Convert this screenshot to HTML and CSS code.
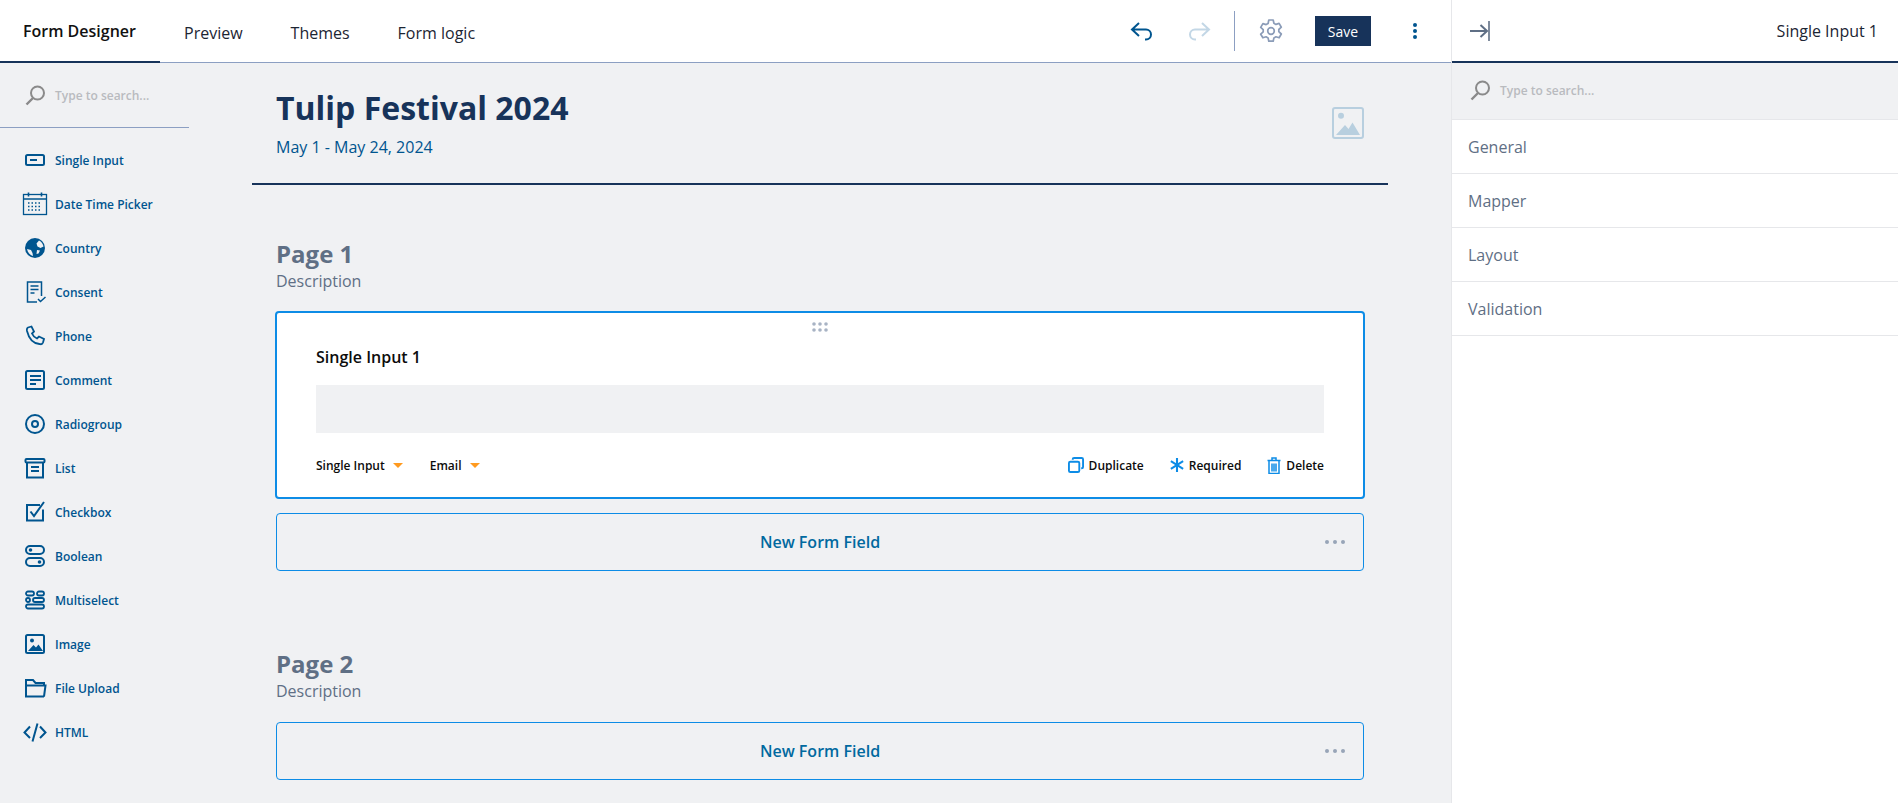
FILE: index.html
```html
<!DOCTYPE html>
<html lang="en">
<head>
<meta charset="utf-8">
<title>Form Designer</title>
<link rel="stylesheet" href="styles.css">
</head>
<body>
<div class="app">
  <div class="main">
    <header class="topbar">
      <nav class="tabs">
        <a class="tab tab-active">Form Designer</a>
        <a class="tab">Preview</a>
        <a class="tab">Themes</a>
        <a class="tab">Form logic</a>
      </nav>
      <div class="tools">
        <svg class="tool-undo" width="26" height="20" viewBox="0 0 26 20" fill="none" stroke="#00558f" stroke-width="2"><path d="M2 8.500h14a5 5 0 0 1 0 10h-1M9 2 2 8.500l7 6.500"/></svg>
        <svg class="tool-redo" width="26" height="20" viewBox="0 0 26 20" fill="none" stroke="#c3d7e6" stroke-width="2"><path d="M24 8.500H10a5 5 0 0 0 0 10h1M17 2l7 6.500-7 6.500"/></svg>
        <span class="tool-sep"></span>
        <svg class="tool-gear" width="26" height="26" viewBox="0 0 26 26" fill="none" stroke="#8b9cb8" stroke-width="1.700"><path d="M10.800 2h4.400l.7 3.300 2 1.100 3.200-1 2.200 3.800-2.500 2.300v2.200l2.500 2.300-2.200 3.800-3.200-1-2 1.100-.7 3.300h-4.400l-.7-3.300-2-1.100-3.200 1L2.700 16.200l2.500-2.300v-2.200L2.700 9.400l2.200-3.800 3.200 1 2-1.100z" stroke-linejoin="round"/><circle cx="13" cy="13" r="3.300"/></svg>
        <button class="save">Save</button>
        <svg class="tool-more" width="6" height="18" viewBox="0 0 6 18" fill="#00558f"><circle cx="3" cy="3" r="2"/><circle cx="3" cy="9" r="2"/><circle cx="3" cy="15" r="2"/></svg>
      </div>
    </header>
    <div class="workspace">
      <aside class="toolbox">
        <div class="search search-left">
          <svg class="search-icon" width="21" height="21" viewBox="0 0 21 21" fill="none" stroke="#8a8a8a" stroke-width="2"><circle cx="12.500" cy="8" r="6.500"/><path d="M8 13 1.500 19.500" stroke-width="2.400"/></svg>
          <span class="search-text">Type to search...</span>
        </div>
        <ul class="items">
          <li class="item"><svg class="ic" width="26" height="24" viewBox="0 0 26 24" fill="none" stroke="#00558f" stroke-width="2"><rect x="4" y="7" width="18" height="10" rx="1.500"/><path d="M8 12h7"/></svg>Single Input</li>
          <li class="item"><svg class="ic" width="26" height="24" viewBox="0 0 26 24" fill="none" stroke="#00558f" stroke-width="1.300"><rect x="1.500" y="2.500" width="23" height="20"/><path d="M1.500 7h23M6.500 .5v4M19.500 .5v4" stroke-width="1.600"/><path d="M6 11h14M6 14.500h14M6 18h14" stroke-width="1.500" stroke-dasharray="1.500 2"/></svg>Date Time Picker</li>
          <li class="item"><svg class="ic" width="26" height="24" viewBox="0 0 26 24"><circle cx="13" cy="12" r="10" fill="#00558f"/><path d="M17 4.500c2.500 1 4 3.500 4.500 6l-3 1.500-3-1.500-1-3zM5 13l4 1 1.500 3 .5 3c-3-1-5.300-3.500-6-7zM15 14l3 .5-1.500 3-2 .5z" fill="#f0f1f3"/></svg>Country</li>
          <li class="item"><svg class="ic" width="26" height="24" viewBox="0 0 26 24" fill="none" stroke="#00558f" stroke-width="1.500"><path d="M19.500 16V2H5.500v20H15"/><path d="M8.500 6h8M8.500 9.500h8M8.500 13h4" stroke-width="1.500"/><path d="m16 19 2.500 2.500L23.500 17" stroke-width="1.500"/></svg>Consent</li>
          <li class="item"><svg class="ic" width="26" height="24" viewBox="0 0 26 24" fill="none" stroke="#00558f" stroke-width="1.800"><path d="M6 3.500 9.500 2.500 12 7.500 10 9.500c1 2.500 2.500 4 5 5l2-2 5 2.500-1 3.500c-.5 1.500-2 2-3.500 1.500C11 19.500 7 15 5 7c-.3-1.500 0-3 1-3.500z"/></svg>Phone</li>
          <li class="item"><svg class="ic" width="26" height="24" viewBox="0 0 26 24" fill="none" stroke="#00558f" stroke-width="2"><rect x="4" y="3" width="18" height="18" rx="1.500"/><path d="M8 8h11M8 12h11M8 16h6"/></svg>Comment</li>
          <li class="item"><svg class="ic" width="26" height="24" viewBox="0 0 26 24" fill="none" stroke="#00558f" stroke-width="2"><circle cx="13" cy="12" r="9"/><circle cx="13" cy="12" r="3"/></svg>Radiogroup</li>
          <li class="item"><svg class="ic" width="26" height="24" viewBox="0 0 26 24" fill="none" stroke="#00558f" stroke-width="2"><rect x="3.500" y="3" width="19" height="3.500" rx="1"/><path d="M5 6v15.500h16V6M9 11h8M9 15h8"/></svg>List</li>
          <li class="item"><svg class="ic" width="26" height="24" viewBox="0 0 26 24" fill="none" stroke="#00558f" stroke-width="2"><path d="M21 9.500v11H5V5h13"/><path d="m8.500 11.500 3.500 4.500 10-14"/></svg>Checkbox</li>
          <li class="item"><svg class="ic" width="26" height="24" viewBox="0 0 26 24" fill="none" stroke="#00558f" stroke-width="2"><rect x="4" y="2" width="18" height="8" rx="4"/><rect x="4" y="14" width="18" height="8" rx="4"/><circle cx="8.500" cy="6" r="1.800" fill="#00558f" stroke="none"/><circle cx="17.500" cy="18" r="1.800" fill="#00558f" stroke="none"/></svg>Boolean</li>
          <li class="item"><svg class="ic" width="26" height="24" viewBox="0 0 26 24" fill="none" stroke="#00558f" stroke-width="1.800"><rect x="4" y="3.500" width="8" height="4" rx="2"/><rect x="15" y="3.500" width="7" height="4" rx="2"/><rect x="4" y="10" width="4" height="4" rx="2"/><rect x="11" y="10" width="11" height="4" rx="2"/><rect x="4" y="16.500" width="18" height="4" rx="2"/></svg>Multiselect</li>
          <li class="item"><svg class="ic" width="26" height="24" viewBox="0 0 26 24"><rect x="4" y="3" width="18" height="18" rx="1.500" fill="none" stroke="#00558f" stroke-width="2"/><circle cx="10" cy="8.500" r="2" fill="#00558f"/><path d="M6 19l5.500-6 2.500 2.500 2.500-3L21 19z" fill="#00558f"/></svg>Image</li>
          <li class="item"><svg class="ic" width="26" height="24" viewBox="0 0 26 24" fill="none" stroke="#00558f" stroke-width="2"><path d="M22 20.500H4V4h7l2.500 3H22v2M4 20.500V9.500h19.500L22 20.500"/></svg>File Upload</li>
          <li class="item"><svg class="ic" width="26" height="24" viewBox="0 0 26 24" fill="none" stroke="#00558f" stroke-width="2"><path d="M8 6.500 2.500 12.500 8 18M18 6.500l5.500 6L18 18M15.500 3.500l-5 18"/></svg>HTML</li>
        </ul>
      </aside>
      <main class="canvas">
        <section class="form-head">
          <div class="form-title">
            <h1>Tulip Festival 2024</h1>
            <p>May 1 - May 24, 2024</p>
          </div>
          <svg class="logo-ph" width="32" height="32" viewBox="0 0 32 32" fill="none"><rect x="1" y="1" width="30" height="30" rx="2" stroke="#b8cfdf" stroke-width="2"/><circle cx="9" cy="8.700" r="3" fill="#b8cfdf"/><path d="M4 28 13 18l3.500 4 4-6.500L28 28z" fill="#b8cfdf"/></svg>
        </section>
        <section class="page page-one">
          <h2>Page 1</h2>
          <p class="page-desc">Description</p>
          <div class="card">
            <svg class="drag" width="16" height="10" viewBox="0 0 16 10" fill="#a8b3c4"><circle cx="2" cy="2" r="1.800"/><circle cx="8" cy="2" r="1.800"/><circle cx="14" cy="2" r="1.800"/><circle cx="2" cy="8" r="1.800"/><circle cx="8" cy="8" r="1.800"/><circle cx="14" cy="8" r="1.800"/></svg>
            <div class="card-title">Single Input 1</div>
            <div class="field"></div>
            <div class="card-foot">
              <div class="selects">
                <span class="sel">Single Input<i class="caret"></i></span>
                <span class="sel">Email<i class="caret"></i></span>
              </div>
              <div class="actions">
                <span class="act"><svg width="16" height="16" viewBox="0 0 17 17" fill="none" stroke="#0d8ce6" stroke-width="2"><rect x="1" y="5" width="11" height="11" rx="1.500"/><path d="M5 3V2.500C5 1.700 5.700 1 6.500 1h8c.8 0 1.500.7 1.500 1.500v8c0 .8-.7 1.500-1.500 1.500H14"/></svg>Duplicate</span>
                <span class="act act-req"><svg width="16" height="16" viewBox="0 0 17 17" fill="none" stroke="#0d8ce6" stroke-width="2.200"><path d="M8.500 1v15M2 4.500l13 8M15 4.500l-13 8"/></svg>Required</span>
                <span class="act act-del"><svg width="14" height="17" viewBox="0 0 14 17" fill="none" stroke="#0d8ce6" stroke-width="1.500"><path d="M.5 3.500h13M5 3.500V1h4v2.500"/><path d="M2 3.500v13h10v-13M5 6.500v8M7 6.500v8M9 6.500v8"/></svg>Delete</span>
              </div>
            </div>
          </div>
          <div class="new-field"><span>New Form Field</span><i class="dots"><b></b><b></b><b></b></i></div>
        </section>
        <section class="page page-two">
          <h2>Page 2</h2>
          <p class="page-desc">Description</p>
          <div class="new-field new-field-two"><span>New Form Field</span><i class="dots"><b></b><b></b><b></b></i></div>
        </section>
      </main>
    </div>
  </div>
  <aside class="panel">
    <header class="panel-top">
      <svg width="20" height="20" viewBox="0 0 20 20" fill="none" stroke="#5f6f85" stroke-width="2"><path d="M0 10h17M10.500 4l6.500 6-6.500 6"/><path d="M19 0v20" stroke-width="1.600"/></svg>
      <span class="panel-name">Single Input 1</span>
    </header>
    <div class="search search-right">
      <svg class="search-icon" width="21" height="21" viewBox="0 0 21 21" fill="none" stroke="#8a8a8a" stroke-width="2"><circle cx="12.500" cy="8" r="6.500"/><path d="M8 13 1.500 19.500" stroke-width="2.400"/></svg>
      <span class="search-text">Type to search...</span>
    </div>
    <div class="panel-row">General</div>
    <div class="panel-row">Mapper</div>
    <div class="panel-row">Layout</div>
    <div class="panel-row">Validation</div>
  </aside>
</div>
</body>
</html>
```
FILE: styles.css
```css
* { box-sizing: border-box; }
html, body { margin: 0; height: 100%; overflow: hidden; }
body { font-family: "Open Sans", "Liberation Sans", sans-serif; background: #fff; color: #17335a; }
.app { display: flex; height: 803px; }
.main { width: 1452px; background: #f0f1f3; display: flex; flex-direction: column; border-right: 1px solid #e6e7ea; }
.topbar { height: 63px; background: #fff; border-bottom: 1px solid #8c9fc2; display: flex; justify-content: space-between; align-items: center; flex: none; }
.tabs { display: flex; height: 63px; }
.tab { height: 63px; display: flex; align-items: center; font-size: 16px; color: #1c2533; padding: 4px 24px 0; }
.tab-active { width: 160px; font-weight: 600; color: #111; border-bottom: 2px solid #17335a; padding: 2px 0 0 23px; }
.tools { display: flex; align-items: center; height: 62px; }
.tool-undo { margin-right: 29px; }
.tool-redo { margin-right: 23px; }
.tool-sep { width: 1px; height: 40px; background: #8c9fc2; margin-right: 23px; }
.tool-gear { margin-right: 31px; }
.save { width: 56px; height: 30px; background: #17335a; color: #fff; border: 0; font: 400 14px "Open Sans", sans-serif; padding: 0; margin-right: 41px; }
.tool-more { margin-right: 33px; }
.workspace { flex: 1; display: flex; min-height: 0; }
.toolbox { width: 252px; flex: none; }
.search { display: flex; align-items: center; }
.search-left { width: 189px; height: 65px; border-bottom: 1px solid #8c9fc2; padding: 0 0 0 25px; }
.search-text { font-size: 12px; font-weight: 600; color: #b9bbbf; margin-left: 9px; }
.items { list-style: none; margin: 10px 0 0; padding: 0; }
.item { height: 44px; display: flex; align-items: center; font-size: 12px; font-weight: 600; color: #00558f; padding-left: 22px; }
.ic { margin-right: 7px; flex: none; }
.canvas { flex: 1; min-width: 0; padding-right: 63px; }
.form-head { width: 1136px; height: 122px; border-bottom: 2px solid #17335a; display: flex; justify-content: space-between; padding: 25px 24px 0; }
.form-title h1 { margin: 0; font-size: 32px; line-height: 40px; font-weight: 700; color: #17335a; }
.form-title p { margin: 8px 0 0; font-size: 16px; line-height: 22px; color: #00558f; }
.logo-ph { margin: 19px 0 0; }
.page { margin-left: 23px; width: 1090px; }
.page-one { padding-top: 52px; }
.page-two { padding-top: 76px; }
.page h2 { margin: 0 0 0 1px; font-size: 24px; line-height: 33px; font-weight: 700; color: #5f6f85; }
.page-desc { margin: 0 0 0 1px; font-size: 16px; line-height: 22px; color: #5f6f85; }
.card { position: relative; height: 188px; margin-top: 19px; background: #fff; border: 2px solid #0d8ce6; border-radius: 4px; padding: 33px 39px 0; }
.drag { position: absolute; top: 9px; left: 535px; }
.card-title { font-size: 16px; font-weight: 600; line-height: 22px; color: #0c0c0c; }
.field { height: 48px; margin-top: 17px; background: #f0f1f3; }
.card-foot { display: flex; justify-content: space-between; align-items: center; margin-top: 20px; height: 24px; }
.selects, .actions { display: flex; align-items: center; }
.sel { display: flex; align-items: center; font-size: 12px; font-weight: 600; color: #0c0c0c; margin-right: 27px; }
.caret { width: 0; height: 0; border-left: 5px solid transparent; border-right: 5px solid transparent; border-top: 5px solid #ff9a1f; margin-left: 8px; }
.act { display: flex; align-items: center; gap: 5px; font-size: 12px; font-weight: 600; color: #0c0c0c; }
.act-req { gap: 4px; margin-left: 25px; }
.act-del { margin-left: 26px; }
.new-field { position: relative; display: flex; align-items: center; justify-content: center; height: 58px; margin: 14px 1px 0; border: 1px solid #0d8ce6; border-radius: 4px; font-size: 16px; font-weight: 600; color: #00699f; }
.new-field-two { margin-top: 20px; }
.dots { position: absolute; right: 18px; top: 26px; display: flex; gap: 4px; }
.dots b { width: 4px; height: 4px; border-radius: 50%; background: #98a5b8; }
.panel { flex: 1; background: #fff; }
.panel-top { height: 63px; border-bottom: 2px solid #17335a; display: flex; justify-content: space-between; align-items: center; padding: 0 20px 0 18px; }
.panel-name { font-size: 16px; color: #1c2533; }
.search-right { height: 57px; background: #f0f1f3; border-bottom: 1px solid #e6e7ea; padding: 0 0 2px 18px; }
.panel-row { height: 54px; border-bottom: 1px solid #e6e7ea; font-size: 16px; color: #5f6f85; padding-left: 16px; display: flex; align-items: center; }
```
